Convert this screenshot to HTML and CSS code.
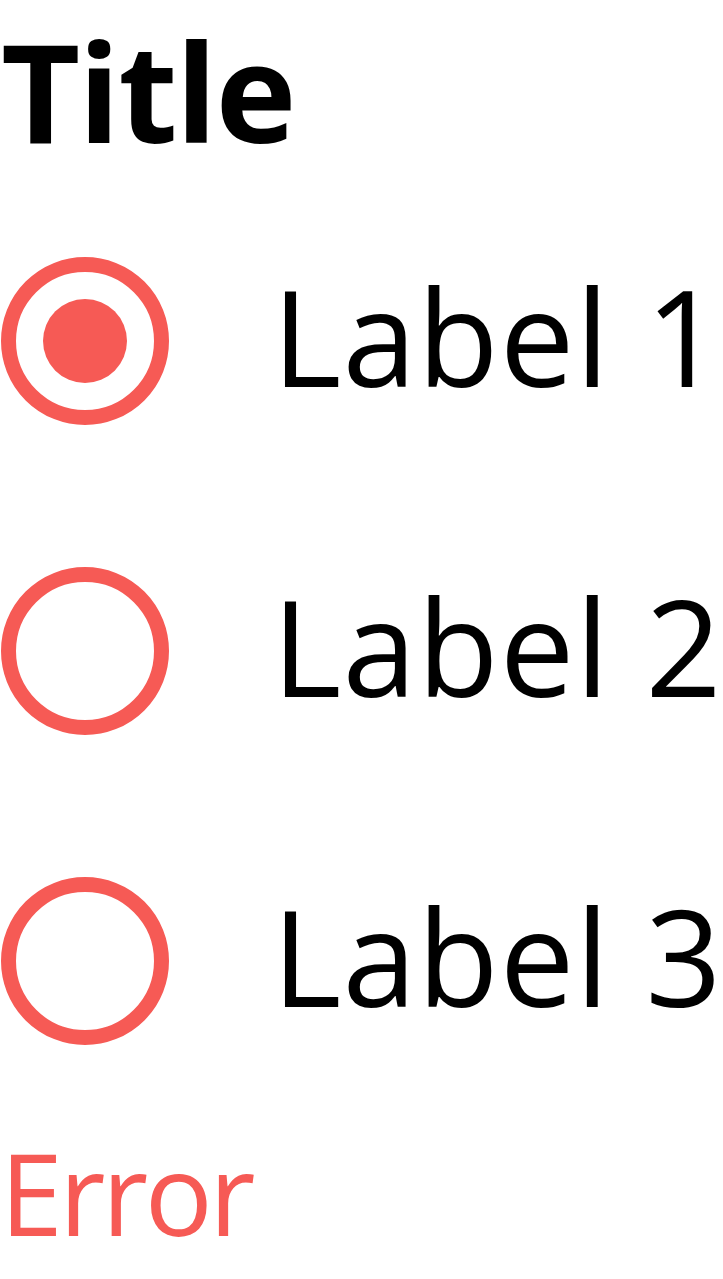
FILE: index.html
```html
<!DOCTYPE html>
<html lang="en">
<head>
<meta charset="utf-8">
<title>Radio group</title>
<link rel="stylesheet" href="styles.css">
</head>
<body>
<main class="field">
  <h1 class="title">Title</h1>
  <div class="group" role="radiogroup">
    <label class="option">
      <span class="radio checked"><span class="dot"></span></span>
      <span class="label">Label 1</span>
    </label>
    <label class="option">
      <span class="radio"></span>
      <span class="label">Label 2</span>
    </label>
    <label class="option">
      <span class="radio"></span>
      <span class="label">Label 3</span>
    </label>
  </div>
  <p class="error">Error</p>
</main>
</body>
</html>
```
FILE: styles.css
```css
html, body {
  margin: 0;
  padding: 0;
  background: #ffffff;
}
body {
  font-family: "Open Sans", "Noto Sans", sans-serif;
  color: #000000;
}
.field {
  display: flex;
  flex-direction: column;
}
.title {
  margin: 8px 0 0 1px;
  font-size: 137px;
  line-height: 1.2;
  font-weight: 700;
  letter-spacing: -2px;
}
.group {
  display: flex;
  flex-direction: column;
  gap: 142px;
  margin-top: 85px;
}
.option {
  display: flex;
  align-items: center;
  gap: 103px;
  height: 168px;
}
.radio {
  box-sizing: border-box;
  width: 168px;
  height: 168px;
  flex: none;
  border: 15px solid #f65a55;
  border-radius: 50%;
  display: flex;
  align-items: center;
  justify-content: center;
  margin-left: 1px;
}
.dot {
  width: 84px;
  height: 84px;
  border-radius: 50%;
  background: #f65a55;
}
.label {
  font-size: 133px;
  line-height: 1.3;
  letter-spacing: 1px;
  padding-bottom: 10px;
  white-space: nowrap;
}
.error {
  margin: 80px 0 0 0;
  font-size: 113px;
  line-height: 1.2;
  letter-spacing: -3.5px;
  color: #f65a55;
}
```
